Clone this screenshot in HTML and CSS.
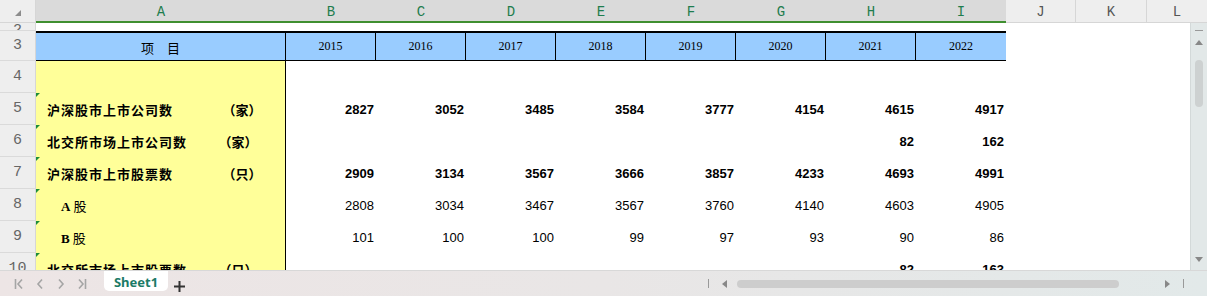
FILE: index.html
```html
<!DOCTYPE html>
<html>
<head>
  <meta charset="utf-8">
  <link rel="stylesheet" href="styles.css">
</head>
<body>
  <div class="app">
    <!-- column letters -->
    <div class="colheads">
      <div class="corner"><span class="tri"></span></div>
      <div class="ch sel">A</div>
      <div class="ch sel">B</div>
      <div class="ch sel">C</div>
      <div class="ch sel">D</div>
      <div class="ch sel">E</div>
      <div class="ch sel">F</div>
      <div class="ch sel">G</div>
      <div class="ch sel">H</div>
      <div class="ch sel">I</div>
      <div class="ch">J</div>
      <div class="ch">K</div>
      <div class="ch">L</div>
    </div>

    <div class="main">
      <div class="grid">
        <div class="row r2">
          <div class="rh"><span>2</span></div>
        </div>

        <div class="row r3">
          <div class="rh">3</div>
          <div class="hd first">项　目</div>
          <div class="hd">2015</div>
          <div class="hd">2016</div>
          <div class="hd">2017</div>
          <div class="hd">2018</div>
          <div class="hd">2019</div>
          <div class="hd">2020</div>
          <div class="hd">2021</div>
          <div class="hd">2022</div>
        </div>

        <div class="row">
          <div class="rh">4</div>
          <div class="a"></div>
        </div>

        <div class="row">
          <div class="rh">5</div>
          <div class="a mk"><span>沪深股市上市公司数</span><span class="unit">（家）</span></div>
          <div class="n">2827</div>
          <div class="n">3052</div>
          <div class="n">3485</div>
          <div class="n">3584</div>
          <div class="n">3777</div>
          <div class="n">4154</div>
          <div class="n">4615</div>
          <div class="n">4917</div>
        </div>

        <div class="row">
          <div class="rh">6</div>
          <div class="a mk"><span>北交所市场上市公司数</span><span class="unit u2">（家）</span></div>
          <div class="n"></div>
          <div class="n"></div>
          <div class="n"></div>
          <div class="n"></div>
          <div class="n"></div>
          <div class="n"></div>
          <div class="n">82</div>
          <div class="n">162</div>
        </div>

        <div class="row">
          <div class="rh">7</div>
          <div class="a mk"><span>沪深股市上市股票数</span><span class="unit">（只）</span></div>
          <div class="n">2909</div>
          <div class="n">3134</div>
          <div class="n">3567</div>
          <div class="n">3666</div>
          <div class="n">3857</div>
          <div class="n">4233</div>
          <div class="n">4693</div>
          <div class="n">4991</div>
        </div>

        <div class="row plain">
          <div class="rh">8</div>
          <div class="a mk sub"><span><b class="lat">A</b>股</span></div>
          <div class="n">2808</div>
          <div class="n">3034</div>
          <div class="n">3467</div>
          <div class="n">3567</div>
          <div class="n">3760</div>
          <div class="n">4140</div>
          <div class="n">4603</div>
          <div class="n">4905</div>
        </div>

        <div class="row plain">
          <div class="rh">9</div>
          <div class="a mk sub"><span><b class="lat">B</b>股</span></div>
          <div class="n">101</div>
          <div class="n">100</div>
          <div class="n">100</div>
          <div class="n">99</div>
          <div class="n">97</div>
          <div class="n">93</div>
          <div class="n">90</div>
          <div class="n">86</div>
        </div>

        <div class="row">
          <div class="rh">10</div>
          <div class="a mk"><span>北交所市场上市股票数</span><span class="unit u2">（只）</span></div>
          <div class="n"></div>
          <div class="n"></div>
          <div class="n"></div>
          <div class="n"></div>
          <div class="n"></div>
          <div class="n"></div>
          <div class="n">82</div>
          <div class="n">163</div>
        </div>
      </div>

      <div class="vscroll">
        <span class="dash"></span>
        <span class="up"></span>
        <span class="vthumb"></span>
        <span class="down"></span>
      </div>
    </div>

    <!-- sheet tabs + horizontal scroll -->
    <div class="tabbar">
      <div class="nav">
        <svg width="10" height="12" viewBox="0 0 10 12"><path d="M1.5 1v10M8 1.5 4 6l4 4.5" fill="none" stroke="#a5a5a5" stroke-width="1.6"/></svg>
        <svg width="10" height="12" viewBox="0 0 10 12"><path d="M7 1.5 3 6l4 4.5" fill="none" stroke="#a5a5a5" stroke-width="1.6"/></svg>
        <svg width="10" height="12" viewBox="0 0 10 12"><path d="M3 1.5 7 6l-4 4.5" fill="none" stroke="#a5a5a5" stroke-width="1.6"/></svg>
        <svg width="10" height="12" viewBox="0 0 10 12"><path d="M2 1.5 6 6l-4 4.5M8.5 1v10" fill="none" stroke="#a5a5a5" stroke-width="1.6"/></svg>
      </div>
      <div class="tab">Sheet1</div>
      <div class="plus">
        <svg width="11" height="11" viewBox="0 0 11 11"><path d="M5.5 0v11M0 5.5h11" stroke="#333" stroke-width="2"/></svg>
      </div>
      <div class="hscroll">
        <span class="bar"></span>
        <span class="left"></span>
        <span class="hthumb"></span>
        <span class="right"></span>
        <span class="bar end"></span>
      </div>
    </div>
  </div>
</body>
</html>
```

FILE: styles.css
```css
body {
  margin: 0;
  font-family: "Liberation Sans", "Noto Sans CJK SC", sans-serif;
  background: #fff;
  overflow: hidden;
}

.app {
  width: 1207px;
  height: 296px;
  display: flex;
  flex-direction: column;
}

/* column letters */
.colheads {
  flex: none;
  height: 23px;
  display: grid;
  grid-template-columns: 36px 250px repeat(8, 90px) 70px 71px 1fr;
}

.corner {
  background: #eeeeee;
  border-right: 1px solid #d6d6d6;
  border-bottom: 1px solid #d6d6d6;
  padding: 10px 0 0 15px;
  box-sizing: border-box;
}

.tri {
  display: block;
  width: 0;
  height: 0;
  border-left: 6px solid transparent;
  border-bottom: 6px solid #8c8c8c;
}

.ch {
  background: #eeeeee;
  border-right: 1px solid #d6d6d6;
  border-bottom: 1px solid #d6d6d6;
  display: flex;
  align-items: center;
  justify-content: center;
  padding-top: 2px;
  box-sizing: border-box;
  font-family: "Liberation Mono", monospace;
  font-size: 14px;
  color: #555;
}

.ch.sel {
  background: #dadada;
  color: #1e7d4e;
  border-right: none;
  border-bottom: 2px solid #3f8f30;
}

.ch:last-child {
  border-right: none;
}

/* sheet body */
.main {
  flex: 1;
  min-height: 0;
  display: flex;
}

.grid {
  flex: 1;
  overflow: hidden;
}

.row {
  display: grid;
  grid-template-columns: 36px 250px repeat(8, 90px) 70px 71px 1fr;
  height: 32px;
}

.rh {
  background: #eeeeee;
  border-right: 1px solid #d6d6d6;
  border-bottom: 1px solid #dadada;
  box-sizing: border-box;
  display: flex;
  align-items: center;
  justify-content: center;
  font-family: "Liberation Mono", monospace;
  font-size: 15px;
  color: #666;
}

.r2 {
  height: 8px;
}

.r2 .rh {
  align-items: flex-start;
  overflow: hidden;
}

.r2 .rh span {
  line-height: 15px;
}

.r3 {
  height: 30px;
}

.hd {
  background: #99ccff;
  border-top: 2px solid #000;
  border-bottom: 1px solid #000;
  border-right: 1px solid #000;
  box-sizing: border-box;
  display: flex;
  align-items: center;
  justify-content: center;
  font-family: "Liberation Serif", serif;
  font-size: 12px;
  color: #000;
}

.hd:last-child {
  border-right: none;
}

.hd.first {
  font-family: "Noto Sans CJK SC", sans-serif;
  font-size: 13px;
  padding-top: 1px;
}

.a {
  position: relative;
  background: #ffff99;
  border-right: 1px solid #000;
  display: flex;
  align-items: center;
  padding-left: 11px;
  font-family: "Noto Sans CJK SC", sans-serif;
  font-weight: bold;
  font-size: 13px;
  letter-spacing: 1px;
  color: #000;
}

.a.mk::before {
  content: "";
  position: absolute;
  left: 0;
  top: 0;
  border-top: 4px solid #1c8c3a;
  border-right: 4px solid transparent;
}

.unit {
  margin-left: auto;
  width: 42px;
  margin-right: 22px;
  text-align: center;
  letter-spacing: 0;
}

.unit.u2 {
  margin-right: 26px;
}

.a.sub {
  padding-left: 25px;
  font-weight: normal;
  letter-spacing: 0;
}

.lat {
  font-family: "Liberation Serif", serif;
  font-size: 13px;
  margin-right: 3px;
}

.n {
  display: flex;
  align-items: center;
  justify-content: flex-end;
  padding-right: 2px;
  font-family: "Liberation Sans", sans-serif;
  font-weight: bold;
  font-size: 13px;
  color: #000;
}

.row.plain .n {
  font-weight: normal;
}

/* vertical scrollbar */
.vscroll {
  flex: none;
  width: 17px;
  background: #e2e8e8;
  border-left: 1px solid #d3d9d9;
  display: flex;
  flex-direction: column;
  align-items: center;
  padding-top: 7px;
  box-sizing: border-box;
}

.dash {
  width: 8px;
  height: 1px;
  background: #999;
}

.up {
  margin-top: 9px;
  border-left: 4px solid transparent;
  border-right: 4px solid transparent;
  border-bottom: 5px solid #888;
}

.vthumb {
  margin-top: 15px;
  width: 8px;
  height: 47px;
  border-radius: 4px;
  background: #cdd1d1;
}

.down {
  margin-top: auto;
  margin-bottom: 8px;
  border-left: 4px solid transparent;
  border-right: 4px solid transparent;
  border-top: 5px solid #888;
}

/* tabs */
.tabbar {
  flex: none;
  height: 26px;
  display: flex;
  align-items: flex-start;
  background: linear-gradient(to right, #ede5e5, #e9e6e6 50%, #e2e9e9);
  border-top: 1px solid #d8d8d8;
  box-sizing: border-box;
}

.nav {
  display: flex;
  gap: 11px;
  padding: 7px 0 0 14px;
}

.tab {
  margin-left: 17px;
  width: 64px;
  height: 20px;
  background: #fff;
  border-radius: 0 0 5px 5px;
  display: flex;
  align-items: center;
  justify-content: center;
  padding-top: 2px;
  box-sizing: border-box;
  font-family: "Noto Sans", "Liberation Sans", sans-serif;
  font-weight: bold;
  font-size: 13px;
  color: #1b7a66;
}

.plus {
  margin-left: 6px;
  padding-top: 7px;
}

.hscroll {
  margin-left: auto;
  margin-right: 23px;
  display: flex;
  align-items: center;
  height: 25px;
}

.bar {
  width: 1px;
  height: 9px;
  background: #999;
}

.left {
  margin-left: 13px;
  border-top: 4px solid transparent;
  border-bottom: 4px solid transparent;
  border-right: 5px solid #888;
}

.hthumb {
  margin-left: 10px;
  width: 382px;
  height: 8px;
  border-radius: 4px;
  background: #cdcdcd;
}

.right {
  margin-left: 46px;
  border-top: 4px solid transparent;
  border-bottom: 4px solid transparent;
  border-left: 5px solid #888;
}

.bar.end {
  margin-left: 13px;
}
```
